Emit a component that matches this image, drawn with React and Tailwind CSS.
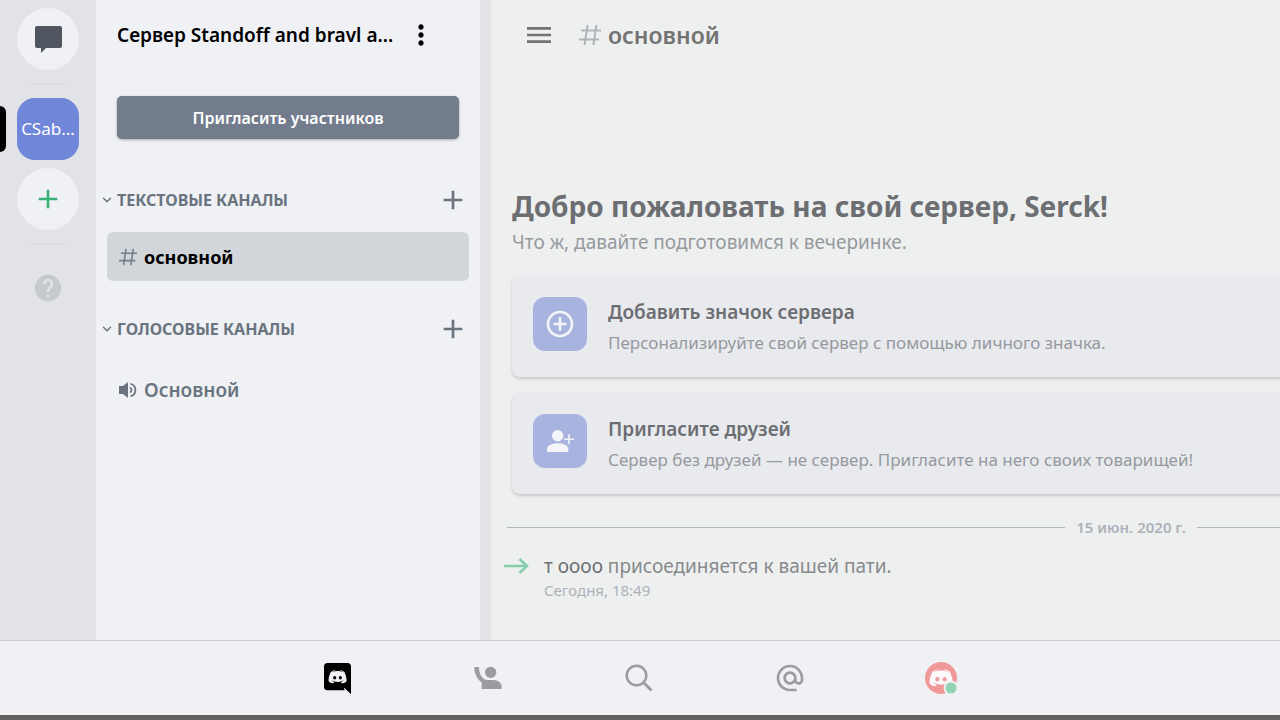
import React from 'react';
import { ChevronDown } from 'lucide-react';
import { MdAdd, MdAddCircleOutline, MdAlternateEmail, MdHelp, MdMenu, MdMoreVert } from 'react-icons/md';

const CLYDE_FACE =
    'M375.04 295.424c0-82.432-36.864-149.248-36.864-149.248-36.864-27.648-71.936-26.88-71.936-26.88l-3.584 4.096c43.52 13.312 63.744 32.512 63.744 32.512-60.811-33.329-132.244-33.335-191.232-7.424-9.472 4.352-15.104 7.424-15.104 7.424s21.248-20.224 67.328-33.536l-2.56-3.072s-35.072-.768-71.936 26.88c0 0-36.864 66.816-36.864 149.248 0 0 21.504 37.12 78.08 38.912 0 0 9.472-11.52 17.152-21.248-32.512-9.728-44.8-30.208-44.8-30.208 3.766 2.636 9.976 6.053 10.496 6.4 43.21 24.198 104.588 32.126 159.744 8.96 8.96-3.328 18.944-8.192 29.44-15.104 0 0-12.8 20.992-46.336 30.464 7.68 9.728 16.896 20.736 16.896 20.736 56.576-1.792 78.336-38.912 78.336-38.912z';

const Clyde = ({ face, eyes }) => (
    <>
        <path d={CLYDE_FACE} fill={face} />
        <ellipse cx="177.7" cy="243.2" rx="26.1" ry="28.4" fill={eyes} />
        <ellipse cx="271.1" cy="243.2" rx="26.1" ry="28.4" fill={eyes} />
    </>
);

const DiscordIcon = () => (
    <svg viewBox="0 0 448 512" className="w-[27px] h-[31px]">
        <path
            d="M448 52.736V512c-64.494-56.994-43.868-38.128-118.784-107.776l13.568 47.36H52.48C23.552 451.584 0 428.032 0 398.848V52.736C0 23.552 23.552 0 52.48 0h343.04C424.448 0 448 23.552 448 52.736z"
            fill="#000"
        />
        <Clyde face="#eff1f5" eyes="#000" />
    </svg>
);

const AvatarIcon = () => (
    <svg viewBox="0 0 33 33" className="w-[33px] h-[33px]">
        <circle cx="16" cy="16" r="16" fill="#f19998" />
        <svg x="0" y="0" width="32" height="32" viewBox="19 22 410 410">
            <Clyde face="#fbf8f9" eyes="#f19998" />
        </svg>
        <circle cx="26" cy="26" r="7.5" fill="#eff1f5" />
        <circle cx="26" cy="26" r="5.5" fill="#91d3b2" />
    </svg>
);

const FriendsIcon = () => (
    <svg viewBox="494 108 82 72" className="w-7 h-6 text-[#9a9ca0]" fill="currentColor">
        <circle cx="543" cy="127" r="17" />
        <path d="M494 111h14c0 21 9 36 23 39h20c15 0 25 9 25 21v6h-60v-20c-14-9-22-26-22-46z" />
    </svg>
);

const SearchIcon = () => (
    <svg viewBox="0 0 28 28" className="w-7 h-7 text-[#9a9ca0]" fill="none" stroke="currentColor" strokeWidth="2.5">
        <circle cx="11.5" cy="11.5" r="9.8" />
        <path d="M18.5 18.5 26.5 26.5" strokeWidth="3" />
    </svg>
);

const HashIcon = ({ className }) => (
    <svg viewBox="0 0 22 22" className={className} fill="none" stroke="currentColor" strokeWidth="2">
        <path d="M8.6 1 5.6 21M17.4 1l-3 20M2.2 6.4H22M0 15.4h20" />
    </svg>
);

const SpeakerIcon = () => (
    <svg viewBox="0 0 18 18" className="w-[18px] h-[18px] shrink-0" fill="none" stroke="currentColor" strokeWidth="1.7">
        <path d="M0 5h4l5-4v16l-5-4H0z" fill="currentColor" stroke="none" />
        <path d="M11 6.4a3 3 0 0 1 0 5.2M11.5 2.7a6.5 6.5 0 0 1 0 12.6" />
    </svg>
);

const ChatIcon = () => (
    <svg viewBox="0 0 27 27" className="w-[27px] h-[27px]" fill="#4f5660">
        <path d="M2 0h23a2 2 0 0 1 2 2v18a2 2 0 0 1-2 2H11l-5 5v-5H2a2 2 0 0 1-2-2V2a2 2 0 0 1 2-2z" />
    </svg>
);

const InviteIcon = () => (
    <svg viewBox="0 0 27 22" className="w-[27px] h-[22px]" fill="#f3f5f9">
        <circle cx="10.7" cy="5.7" r="5.7" />
        <path d="M0 22v-3c0-4 5.5-5.8 10.7-5.8S21.3 15 21.3 19v3z" />
        <path d="M21.2 4.2h1.6v4.2H27V10h-4.2v4.2h-1.6V10H17V8.4h4.2z" />
    </svg>
);

const ArrowIcon = () => (
    <svg viewBox="0 0 25 16" className="w-[25px] h-4 shrink-0" fill="none" stroke="#86cfac" strokeWidth="2.6">
        <path d="M0 8h23M15.5 1l7.5 7-7.5 7" />
    </svg>
);

const RailDivider = () => <div className="w-10 h-0.5 my-[13px] bg-[#dcdee2]" />;

const ServerRail = () => (
    <nav aria-label="Серверы" className="w-24 shrink-0 bg-[#e1e3e7] flex flex-col items-center pt-2">
        <button aria-label="Личные сообщения" className="w-[62px] h-[62px] rounded-full bg-[#eff1f5] flex items-center justify-center">
            <ChatIcon />
        </button>
        <RailDivider />
        <div className="relative w-full flex justify-center">
            <span className="absolute left-0 top-2 w-1.5 h-[46px] rounded-r-md bg-black" />
            <button className="w-[62px] h-[62px] rounded-[18px] bg-[#6f86d9] text-white text-[17px] leading-6">
                CSab...
            </button>
        </div>
        <button aria-label="Добавить сервер" className="mt-2 w-[62px] h-[62px] rounded-full bg-[#eff1f5] flex items-center justify-center">
            <MdAdd size={32} className="text-[#3bb17c]" />
        </button>
        <RailDivider />
        <button aria-label="Помощь" className="mt-[14px]">
            <MdHelp size={32} className="text-[#c6c9ce]" />
        </button>
    </nav>
);

const Category = ({ title }) => (
    <div className="h-8 pl-1 pr-[11px] flex items-center text-[#6a747e]">
        <button className="flex-1 flex items-center gap-[3px] text-left text-[16px] leading-6 font-bold">
            <ChevronDown size={14} strokeWidth={2.5} />
            {title}
        </button>
        <button aria-label="Создать канал">
            <MdAdd size={32} />
        </button>
    </div>
);

const Channel = ({ name, icon, active }) => (
    <a
        href="#"
        className={`mx-[11px] h-[49px] px-3 rounded-md flex items-center gap-[7px] leading-7 ${active ? 'bg-[#d2d5d9] text-black text-[18px] font-bold' : 'text-[#6a747e] text-[19px] font-semibold'
            }`}
    >
        {icon}
        {name}
    </a>
);

const ChannelList = () => (
    <aside className="w-[384px] shrink-0 bg-[#eff1f5]">
        <header className="h-[70px] pl-[21px] pr-[43px] flex items-center justify-between">
            <h1 className="text-[19px] leading-7 font-semibold text-black whitespace-nowrap">Сервер Standoff and bravl a...</h1>
            <button aria-label="Меню сервера">
                <MdMoreVert size={32} />
            </button>
        </header>
        <div className="px-[21px] pt-[26px] pb-[45px]">
            <button className="w-full h-[43px] rounded-[5px] bg-[#737c8c] text-white text-[16px] leading-6 font-semibold shadow-[0_1px_3px_rgba(0,0,0,0.3)]">
                Пригласить участников
            </button>
        </div>
        <Category title="ТЕКСТОВЫЕ КАНАЛЫ" />
        <div className="pt-4 pb-8">
            <Channel name="основной" active icon={<HashIcon className="w-[18px] h-[18px] shrink-0 text-[#747f8d]" />} />
        </div>
        <Category title="ГОЛОСОВЫЕ КАНАЛЫ" />
        <div className="pt-5">
            <Channel name="Основной" icon={<SpeakerIcon />} />
        </div>
    </aside>
);

const WelcomeCard = ({ icon, title, text }) => (
    <button className="w-full h-[102px] px-[21px] rounded-lg bg-[#e8eaee] flex items-center text-left shadow-[0_2px_3px_rgba(0,0,0,0.16)]">
        <span className="w-[54px] h-[54px] mb-1 rounded-xl bg-[#a8b4df] flex items-center justify-center">{icon}</span>
        <span className="ml-[21px] flex flex-col gap-[5px]">
            <span className="text-[19px] leading-7 font-semibold text-[#6c6e72]">{title}</span>
            <span className="text-[17px] leading-6 text-[#96999e]">{text}</span>
        </span>
    </button>
);

// The chat keeps the full window width and slides partly off to the right
const Chat = () => (
    <main className="flex-1 min-w-0 overflow-hidden bg-[#eef0f0]">
        <div className="w-screen h-full flex flex-col">
            <header className="h-[70px] shrink-0 pl-8 flex items-center">
                <button aria-label="Открыть меню">
                    <MdMenu size={32} className="text-[#737373]" />
                </button>
                <HashIcon className="ml-6 w-[22px] h-[22px] text-[#b0b4ba]" />
                <h2 className="ml-[7px] text-[23px] leading-8 font-semibold text-[#737373]">основной</h2>
            </header>
            <div className="flex-1 flex flex-col justify-end pb-10">
                <section className="px-[21px]">
                    <h3 className="mb-0.5 text-[28px] leading-10 font-bold text-[#6c6e72]">Добро пожаловать на свой сервер, Serck!</h3>
                    <p className="text-[19px] leading-7 text-[#96999e]">Что ж, давайте подготовимся к вечеринке.</p>
                    <div className="mt-[19px] flex flex-col gap-[15px]">
                        <WelcomeCard
                            icon={<MdAddCircleOutline size={32} className="text-[#f3f5f9]" />}
                            title="Добавить значок сервера"
                            text="Персонализируйте свой сервер с помощью личного значка."
                        />
                        <WelcomeCard
                            icon={<InviteIcon />}
                            title="Пригласите друзей"
                            text="Сервер без друзей — не сервер. Пригласите на него своих товарищей!"
                        />
                    </div>
                </section>
                <div className="mt-[21px] mx-4 flex items-center gap-[11px]">
                    <hr className="flex-1 border-[#b3b7c0]" />
                    <time className="text-[15px] leading-6 font-semibold text-[#adb1b9]">15 июн. 2020 г.</time>
                    <hr className="flex-1 border-[#b3b7c0]" />
                </div>
                <div className="mt-[13px] pl-[13px] flex">
                    <div className="h-7 flex items-center">
                        <ArrowIcon />
                    </div>
                    <div className="ml-[15px]">
                        <p className="text-[19px] leading-7 text-[#87898c]">
                            <span className="text-[#6c6e70]">т оооо</span> присоединяется к вашей пати.
                        </p>
                        <time className="block text-[15px] leading-5 text-[#adb1b9]">Сегодня, 18:49</time>
                    </div>
                </div>
            </div>
        </div>
    </main>
);

const TABS = [
    { label: 'Серверы', icon: <DiscordIcon /> },
    { label: 'Друзья', icon: <FriendsIcon /> },
    { label: 'Поиск', icon: <SearchIcon /> },
    { label: 'Упоминания', icon: <MdAlternateEmail size={32} className="text-[#9a9ca0]" /> },
    { label: 'Профиль', icon: <AvatarIcon /> },
];

const TabBar = () => (
    <nav aria-label="Разделы" className="h-20 shrink-0 pr-0.5 bg-[#eff1f5] border-t border-t-[#cbcdd1] border-b-[5px] border-b-[#606060] flex justify-center">
        {TABS.map(tab => (
            <button key={tab.label} aria-label={tab.label} className="w-[151px] flex items-center justify-center">
                {tab.icon}
            </button>
        ))}
    </nav>
);

export default function App() {
    return (
        <div className="font-['Noto_Sans',sans-serif] h-screen flex flex-col overflow-hidden">
            <div className="flex-1 min-h-0 flex">
                <ServerRail />
                <ChannelList />
                <div className="w-[11px] shrink-0 bg-[#e1e3e7]" />
                <Chat />
            </div>
            <TabBar />
        </div>
    );
}
